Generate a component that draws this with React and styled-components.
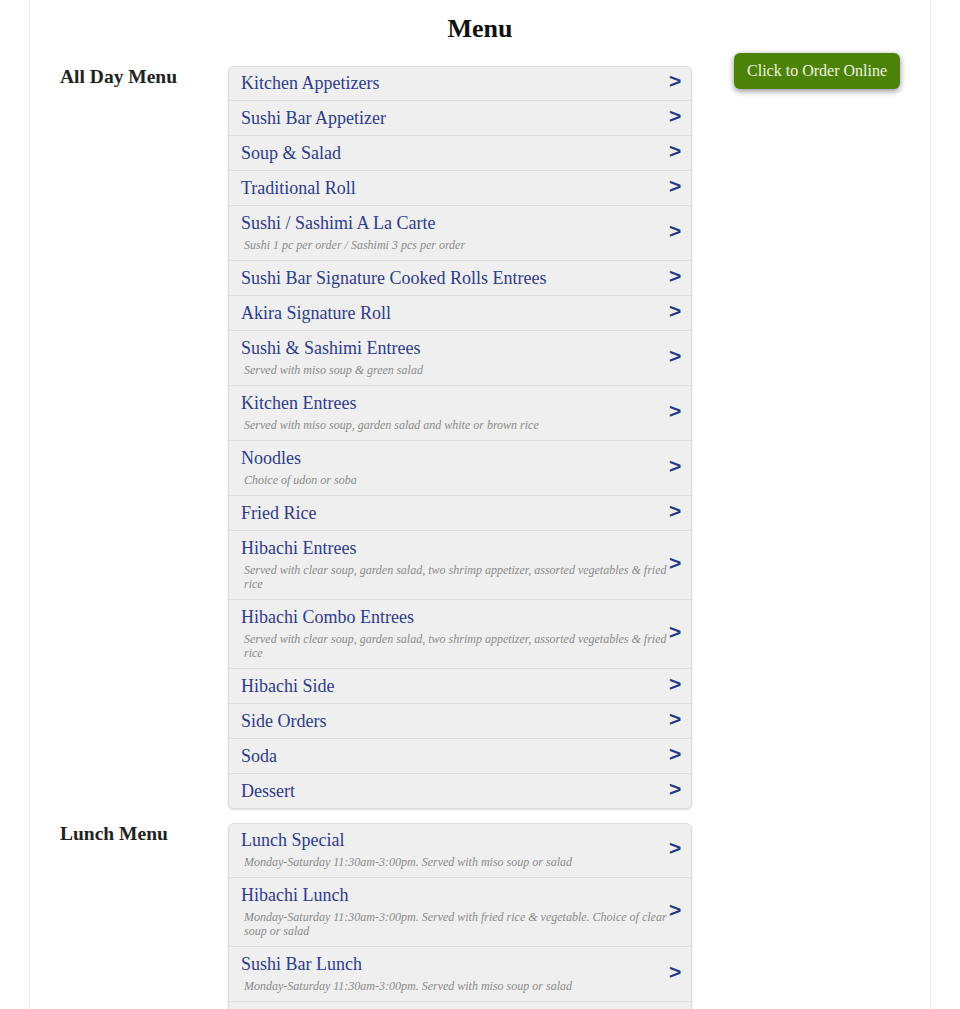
import React from "react";
import styled, { createGlobalStyle } from "styled-components";

const Global = createGlobalStyle`
  html, body { margin: 0; padding: 0; background: #fff; }
  body { font-family: "Liberation Serif", "Times New Roman", serif; color: #222; }
`;

const Page = styled.div`
  max-width: 840px;
  margin: 0 auto;
  padding: 0 30px;
  min-height: 1009px;
  border-left: 1px solid #eee;
  border-right: 1px solid #eee;
`;

const Title = styled.h1`
  margin: 0;
  padding: 14px 0 9px;
  font-size: 26px;
  line-height: 30px;
  font-weight: bold;
  text-align: center;
  color: #111;
`;

const Body = styled.div`
  display: flex;
  align-items: flex-start;
`;

const Main = styled.div`
  padding-top: 13px;
  width: 632px;
`;

const Aside = styled.div`
  flex: 1;
  display: flex;
  justify-content: flex-end;
`;

const OrderButton = styled.a`
  display: inline-block;
  background: #4d8209;
  color: #eef6e2;
  font-size: 16px;
  line-height: 18px;
  padding: 9px 13px 9px 13px;
  border-radius: 6px;
  box-shadow: 0 2px 6px rgba(0, 0, 0, 0.45);
  text-decoration: none;
  cursor: pointer;
`;

const Section = styled.section`
  display: flex;
  align-items: flex-start;
  margin-bottom: 14px;
`;

const SectionLabel = styled.h2`
  margin: 0;
  width: 168px;
  flex: none;
  font-size: 19.5px;
  line-height: 22px;
  font-weight: bold;
  color: #222;
`;

const List = styled.ul`
  list-style: none;
  margin: 0;
  padding: 0;
  width: 464px;
  box-sizing: border-box;
  background: #efefef;
  border: 1px solid #dcdcdc;
  border-radius: 6px;
  box-shadow: 0 1px 2px rgba(0, 0, 0, 0.15);
  overflow: hidden;
`;

const Row = styled.li`
  display: flex;
  align-items: center;
  padding: 7px 10px 6px 12px;
  border-top: 1px solid #dedede;
  &:first-child { border-top: none; padding-top: 6px; }
  cursor: pointer;
`;

const RowText = styled.div`
  flex: 1;
  min-width: 0;
`;

const ItemName = styled.div`
  font-size: 18px;
  line-height: 21px;
  color: #2d3b8d;
`;

const ItemNote = styled.div`
  margin: 4px 0 2px 3px;
  font-size: 12px;
  line-height: 14px;
  font-style: italic;
  color: #8a8a8a;
`;

const Chevron = styled.span`
  flex: none;
  width: 12px;
  margin-bottom: 6px;
  text-align: right;
  font-family: "Liberation Sans", Arial, sans-serif;
  font-weight: bold;
  font-size: 21px;
  line-height: 15px;
  color: #25378a;
`;

const sections = [
  {
    label: "All Day Menu",
    items: [
      { name: "Kitchen Appetizers" },
      { name: "Sushi Bar Appetizer" },
      { name: "Soup & Salad" },
      { name: "Traditional Roll" },
      { name: "Sushi / Sashimi A La Carte", note: "Sushi 1 pc per order / Sashimi 3 pcs per order" },
      { name: "Sushi Bar Signature Cooked Rolls Entrees" },
      { name: "Akira Signature Roll" },
      { name: "Sushi & Sashimi Entrees", note: "Served with miso soup & green salad" },
      { name: "Kitchen Entrees", note: "Served with miso soup, garden salad and white or brown rice" },
      { name: "Noodles", note: "Choice of udon or soba" },
      { name: "Fried Rice" },
      { name: "Hibachi Entrees", note: "Served with clear soup, garden salad, two shrimp appetizer, assorted vegetables & fried rice" },
      { name: "Hibachi Combo Entrees", note: "Served with clear soup, garden salad, two shrimp appetizer, assorted vegetables & fried rice" },
      { name: "Hibachi Side" },
      { name: "Side Orders" },
      { name: "Soda" },
      { name: "Dessert" },
    ],
  },
  {
    label: "Lunch Menu",
    items: [
      { name: "Lunch Special", note: "Monday-Saturday 11:30am-3:00pm. Served with miso soup or salad" },
      { name: "Hibachi Lunch", note: "Monday-Saturday 11:30am-3:00pm. Served with fried rice & vegetable. Choice of clear soup or salad" },
      { name: "Sushi Bar Lunch", note: "Monday-Saturday 11:30am-3:00pm. Served with miso soup or salad" },
      { name: "Lunch Bento Box", note: "Monday-Saturday 11:30am-3:00pm. Served with miso soup or salad" },
    ],
  },
];

export default function App() {
  return (
    <>
      <Global />
      <Page>
        <Title>Menu</Title>
        <Body>
          <Main>
            {sections.map((s) => (
              <Section key={s.label}>
                <SectionLabel>{s.label}</SectionLabel>
                <List>
                  {s.items.map((it) => (
                    <Row key={it.name}>
                      <RowText>
                        <ItemName>{it.name}</ItemName>
                        {it.note && <ItemNote>{it.note}</ItemNote>}
                      </RowText>
                      <Chevron>&gt;</Chevron>
                    </Row>
                  ))}
                </List>
              </Section>
            ))}
          </Main>
          <Aside>
            <OrderButton>Click to Order Online</OrderButton>
          </Aside>
        </Body>
      </Page>
    </>
  );
}
